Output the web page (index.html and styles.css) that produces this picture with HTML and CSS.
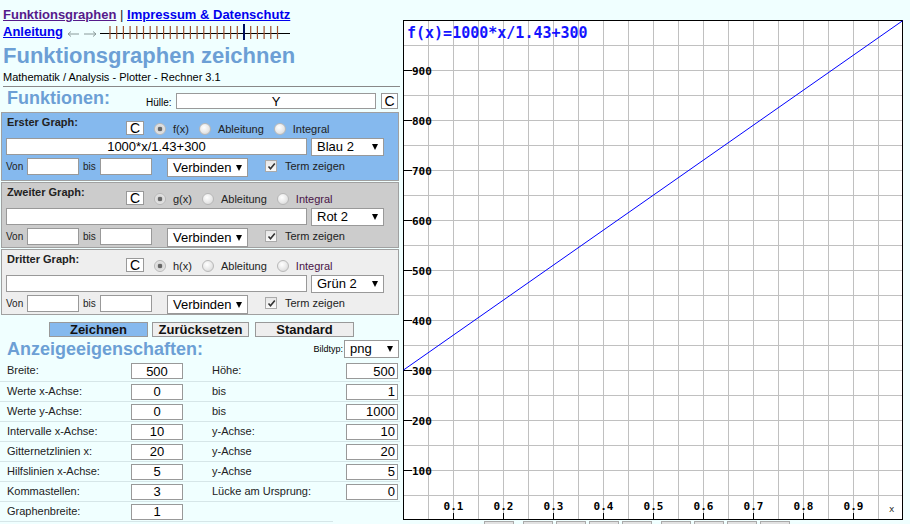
FILE: index.html
```html
<!DOCTYPE html>
<html lang="de">
<head>
    <meta charset="UTF-8">
    <title>Funktionsgraphen zeichnen</title>
    <link rel="stylesheet" href="styles.css">
</head>
<body>
<div class="page">
    <div class="left">
        <div class="nav">
            <a href="#" class="visited">Funktionsgraphen</a> <span class="sep">|</span> <a href="#">Impressum &amp; Datenschutz</a>
        </div>
        <div class="nav">
            <a href="#">Anleitung</a><svg class="ruler" width="226" height="17" viewBox="0 0 226 17">
                <path d="M1 11H12M1 11L4 8.5M1 11L4 13.5" stroke="#8a9a9a" fill="none"/>
                <path d="M17 11H29M29 11L26 8.5M29 11L26 13.5" stroke="#8a9a9a" fill="none"/>
                <path d="M33 10.5H223" stroke="#000"/>
                <path d="M43 3V16M49.7 3V16M56.4 3V16M63.1 3V16M69.8 3V16M76.5 3V16M83.2 3V16M89.9 3V16M96.6 3V16M103.3 3V16M110 3V16M116.7 3V16M123.4 3V16M130.1 3V16M136.8 3V16M143.5 3V16M150.2 3V16M156.9 3V16M163.6 3V16M170.3 3V16M183.7 3V16M190.4 3V16M197.1 3V16M203.8 3V16M210.5 3V16" stroke="#a0522d" stroke-width="1.2"/>
                <path d="M177 1V17" stroke="#001060" stroke-width="2"/>
            </svg>
        </div>
        <h1>Funktionsgraphen zeichnen</h1>
        <div class="sub">Mathematik / Analysis - Plotter - Rechner 3.1</div>

        <div class="funcs-head">
            <h2>Funktionen:</h2>
            <span class="hl">Hülle:</span>
            <input class="huelle" type="text" value="Y">
            <span class="cbtn tall">C</span>
        </div>

        <!-- Erster Graph -->
        <div class="gbox blue">
            <div class="row1">
                <div class="gtitle">Erster Graph:</div>
                <span class="cbtn">C</span>
                <span class="opt"><span class="radio on"></span><span class="olbl">f(x)</span></span>
                <span class="opt"><span class="radio"></span><span class="olbl">Ableitung</span></span>
                <span class="opt"><span class="radio"></span><span class="olbl">Integral</span></span>
            </div>
            <div class="row2">
                <input class="term" type="text" value="1000*x/1.43+300">
                <div class="sel color"><span>Blau 2</span><i class="arrow"></i></div>
            </div>
            <div class="row3">
                <span class="small von">Von</span>
                <input class="range" type="text">
                <span class="small bis">bis</span>
                <input class="range" type="text">
                <div class="sel mode"><span>Verbinden</span><i class="arrow"></i></div>
                <span class="chk"><svg width="9" height="9" viewBox="0 0 9 9"><path d="M1.5 4.5L3.5 6.8L7.8 1.5" stroke="#333" stroke-width="1.6" fill="none"/></svg></span>
                <span class="chk-lbl">Term zeigen</span>
            </div>
        </div>

        <!-- Zweiter Graph -->
        <div class="gbox grey">
            <div class="row1">
                <div class="gtitle">Zweiter Graph:</div>
                <span class="cbtn">C</span>
                <span class="opt"><span class="radio on"></span><span class="olbl">g(x)</span></span>
                <span class="opt"><span class="radio"></span><span class="olbl">Ableitung</span></span>
                <span class="opt"><span class="radio"></span><span class="olbl purple">Integral</span></span>
            </div>
            <div class="row2">
                <input class="term" type="text" value="">
                <div class="sel color"><span>Rot 2</span><i class="arrow"></i></div>
            </div>
            <div class="row3">
                <span class="small von">Von</span>
                <input class="range" type="text">
                <span class="small bis">bis</span>
                <input class="range" type="text">
                <div class="sel mode"><span>Verbinden</span><i class="arrow"></i></div>
                <span class="chk"><svg width="9" height="9" viewBox="0 0 9 9"><path d="M1.5 4.5L3.5 6.8L7.8 1.5" stroke="#333" stroke-width="1.6" fill="none"/></svg></span>
                <span class="chk-lbl">Term zeigen</span>
            </div>
        </div>

        <!-- Dritter Graph -->
        <div class="gbox light">
            <div class="row1">
                <div class="gtitle">Dritter Graph:</div>
                <span class="cbtn">C</span>
                <span class="opt"><span class="radio on"></span><span class="olbl">h(x)</span></span>
                <span class="opt"><span class="radio"></span><span class="olbl">Ableitung</span></span>
                <span class="opt"><span class="radio"></span><span class="olbl purple">Integral</span></span>
            </div>
            <div class="row2">
                <input class="term" type="text" value="">
                <div class="sel color"><span>Grün 2</span><i class="arrow"></i></div>
            </div>
            <div class="row3">
                <span class="small von">Von</span>
                <input class="range" type="text">
                <span class="small bis">bis</span>
                <input class="range" type="text">
                <div class="sel mode"><span>Verbinden</span><i class="arrow"></i></div>
                <span class="chk"><svg width="9" height="9" viewBox="0 0 9 9"><path d="M1.5 4.5L3.5 6.8L7.8 1.5" stroke="#333" stroke-width="1.6" fill="none"/></svg></span>
                <span class="chk-lbl">Term zeigen</span>
            </div>
        </div>

        <div class="actions">
            <span class="btn primary">Zeichnen</span>
            <span class="btn reset">Zurücksetzen</span>
            <span class="btn std">Standard</span>
        </div>

        <div class="props-head">
            <h2>Anzeigeeigenschaften:</h2>
            <span class="bt">Bildtyp:</span>
            <div class="sel png"><span>png</span><i class="arrow"></i></div>
        </div>

        <table class="props">
            <tr><td class="l1">Breite:</td><td class="v1"><input type="text" value="500"></td><td class="l2">Höhe:</td><td class="v2"><input type="text" value="500"></td></tr>
            <tr><td class="l1">Werte x-Achse:</td><td class="v1"><input type="text" value="0"></td><td class="l2">bis</td><td class="v2"><input type="text" value="1"></td></tr>
            <tr><td class="l1">Werte y-Achse:</td><td class="v1"><input type="text" value="0"></td><td class="l2">bis</td><td class="v2"><input type="text" value="1000"></td></tr>
            <tr><td class="l1">Intervalle x-Achse:</td><td class="v1"><input type="text" value="10"></td><td class="l2">y-Achse:</td><td class="v2"><input type="text" value="10"></td></tr>
            <tr><td class="l1">Gitternetzlinien x:</td><td class="v1"><input type="text" value="20"></td><td class="l2">y-Achse</td><td class="v2"><input type="text" value="20"></td></tr>
            <tr><td class="l1">Hilfslinien x-Achse:</td><td class="v1"><input type="text" value="5"></td><td class="l2">y-Achse</td><td class="v2"><input type="text" value="5"></td></tr>
            <tr><td class="l1">Kommastellen:</td><td class="v1"><input type="text" value="3"></td><td class="l2">Lücke am Ursprung:</td><td class="v2"><input type="text" value="0"></td></tr>
            <tr><td class="l1">Graphenbreite:</td><td class="v1"><input type="text" value="1"></td><td class="l2"></td></tr>
        </table>
    </div>

    <div class="right">
        <svg class="plot" width="500" height="500" viewBox="0 0 500 500">
            <defs>
                <pattern id="grid" width="25" height="25" patternUnits="userSpaceOnUse">
                    <path d="M0.5 0V25M0 0.5H25" stroke="#c0c0c0" fill="none"/>
                </pattern>
            </defs>
            <rect width="500" height="500" fill="#fff"/>
            <rect width="500" height="500" fill="url(#grid)"/>
            <rect x="0.5" y="0.5" width="499" height="499" fill="none" stroke="#000"/>

            <!-- y axis -->
            <path d="M0 50.5H9M0 100.5H9M0 150.5H9M0 200.5H9M0 250.5H9M0 300.5H9M0 350.5H9M0 400.5H9M0 450.5H9" stroke="#000"/>
            <g class="ylab">
                <text x="9" y="55">900</text>
                <text x="9" y="105">800</text>
                <text x="9" y="155">700</text>
                <text x="9" y="205">600</text>
                <text x="9" y="255">500</text>
                <text x="9" y="305">400</text>
                <text x="9" y="355">300</text>
                <text x="9" y="405">200</text>
                <text x="9" y="455">100</text>
            </g>

            <!-- x axis -->
            <path d="M50.5 493V499M100.5 493V499M150.5 493V499M200.5 493V499M250.5 493V499M300.5 493V499M350.5 493V499M400.5 493V499M450.5 493V499" stroke="#000"/>
            <g class="xlab">
                <text x="50.5" y="490">0.1</text>
                <text x="100.5" y="490">0.2</text>
                <text x="150.5" y="490">0.3</text>
                <text x="200.5" y="490">0.4</text>
                <text x="250.5" y="490">0.5</text>
                <text x="300.5" y="490">0.6</text>
                <text x="350.5" y="490">0.7</text>
                <text x="400.5" y="490">0.8</text>
                <text x="450.5" y="490">0.9</text>
            </g>
            <text class="xname" x="486" y="492">x</text>

            <line x1="0.5" y1="350" x2="499.5" y2="0.8" stroke="#0000ff" stroke-width="1"/>
            <text class="fterm" x="4" y="18">f(x)=1000*x/1.43+300</text>
        </svg>
        <div class="tools">
            <span></span><span class="gap"></span><span></span><span></span><span></span>
            <span class="gap"></span><span></span><span></span><span></span>
        </div>
    </div>
</div>
</body>
</html>
```

FILE: styles.css
```css
html, body {
    margin: 0;
    padding: 0;
    overflow: hidden;
}

body {
    background: #f0ffff;
    font-family: 'Liberation Sans', Arial, sans-serif;
    color: #000;
}

.page {
    display: flex;
    align-items: flex-start;
}

.left {
    width: 400px;
    flex: none;
}

/* Header */
.nav {
    padding: 0 0 0 3px;
    font: bold 13px/17px 'Liberation Sans', Arial, sans-serif;
    white-space: nowrap;
}

.nav:first-child {
    padding-top: 6px;
}

.nav a {
    color: #0000ee;
}

.nav a.visited {
    color: #551a8b;
}

.nav .sep {
    font-weight: normal;
    color: #222;
}

.ruler {
    vertical-align: top;
    margin-left: 4px;
}

h1 {
    margin: 3px 0 0 3px;
    font: bold 22px/26px 'Liberation Sans', Arial, sans-serif;
    color: #6c9fd5;
}

.sub {
    margin: 2px 0 0 3px;
    padding-bottom: 2px;
    font: 11px/13px 'Liberation Sans', Arial, sans-serif;
    border-bottom: 1px solid #888;
}

h2 {
    margin: 1px 0 0 7px;
    font: bold 18px/20px 'Liberation Sans', Arial, sans-serif;
    color: #6c9fd5;
}

/* Funktionen */
.funcs-head {
    display: flex;
    align-items: flex-start;
    height: 25px;
}

.funcs-head h2 {
    width: 139px;
}

.hl {
    width: 30px;
    margin-top: 10px;
    font: 10px/12px 'Liberation Sans', Arial, sans-serif;
}

input {
    box-sizing: border-box;
    height: 17px;
    margin: 0;
    padding: 0 2px;
    border: 1px solid #999;
    background: #fff;
    font: 13px 'Liberation Sans', Arial, sans-serif;
    color: #000;
    outline: none;
}

.huelle {
    width: 200px;
    height: 16px;
    margin-top: 6px;
    text-align: center;
}

.cbtn {
    box-sizing: border-box;
    display: flex;
    align-items: center;
    justify-content: center;
    width: 18px;
    height: 14px;
    margin-top: 8px;
    border: 1px solid #999;
    background: #fff;
    font: 14px/12px 'Liberation Sans', Arial, sans-serif;
}

.cbtn.tall {
    width: 17px;
    height: 16px;
    margin: 6px 0 0 5px;
}

/* Graph boxes */
.gbox {
    margin: 0 1px 1px;
    padding: 0 4px;
    border: 1px solid #a0a0a0;
}

.gbox.blue {
    background: #85b9ee;
    padding-bottom: 3px;
}

.gbox.grey {
    background: #cccccc;
}

.gbox.light {
    background: #eeeeee;
}

.row1 {
    display: flex;
    align-items: flex-start;
    height: 25px;
}

.gtitle {
    width: 119px;
    padding: 3px 0 0 1px;
    font: bold 11px/13px 'Liberation Sans', Arial, sans-serif;
    color: #222;
}

.opt {
    display: flex;
    align-items: flex-start;
    margin: 10px 0 0 10px;
}

.radio {
    box-sizing: border-box;
    width: 12px;
    height: 12px;
    border: 1px solid #b8b8b8;
    border-radius: 50%;
    background: radial-gradient(circle at 40% 35%, #ffffff 0%, #e8e8e8 55%, #cfcfcf 100%);
}

.radio.on {
    background: radial-gradient(circle, #666 0, #666 2px, #d6d6d6 2.6px, #f4f4f4 100%);
}

.olbl {
    margin-left: 7px;
    font: 11px/13px 'Liberation Sans', Arial, sans-serif;
    color: #222;
}

.olbl.purple {
    color: #4a1448;
}

.row2 {
    display: flex;
    align-items: flex-start;
    height: 20px;
}

.term {
    width: 301px;
    text-align: center;
}

.sel {
    box-sizing: border-box;
    display: flex;
    align-items: center;
    justify-content: space-between;
    height: 18px;
    padding: 0 5px 0 5px;
    border: 1px solid #999;
    background: #fff;
    font: 13px/16px 'Liberation Sans', Arial, sans-serif;
}

.arrow {
    width: 0;
    height: 0;
    border-left: 3px solid transparent;
    border-right: 3px solid transparent;
    border-top: 6px solid #000;
}

.sel.color {
    width: 73px;
    margin-left: 4px;
}

.row3 {
    display: flex;
    align-items: flex-start;
    height: 19px;
}

.small {
    font: 10px/18px 'Liberation Sans', Arial, sans-serif;
    color: #222;
}

.von {
    width: 21px;
}

.bis {
    width: 17px;
    margin-left: 4px;
}

.range {
    width: 52px;
}

.sel.mode {
    width: 81px;
    height: 19px;
    margin-left: 15px;
}

.chk {
    box-sizing: border-box;
    display: flex;
    align-items: center;
    justify-content: center;
    width: 12px;
    height: 12px;
    margin: 2px 0 0 17px;
    border: 1px solid #aaa;
    background: linear-gradient(#e6e6e6, #fafafa);
}

.chk-lbl {
    margin-left: 8px;
    font: 11px/17px 'Liberation Sans', Arial, sans-serif;
    color: #222;
}

/* Buttons */
.actions {
    display: flex;
    margin: 7px 0 0 49px;
}

.btn {
    box-sizing: border-box;
    height: 15px;
    border: 1px solid #999;
    background: #eeeeee;
    font: bold 13px/13px 'Liberation Sans', Arial, sans-serif;
    text-align: center;
    color: #111;
}

.btn.primary {
    width: 99px;
    background: #85b9ee;
}

.btn.reset {
    width: 97px;
    margin-left: 4px;
}

.btn.std {
    width: 99px;
    margin-left: 6px;
}

/* Anzeigeeigenschaften */
.props-head {
    display: flex;
    align-items: flex-start;
    height: 24px;
}

.props-head h2 {
    margin-top: 2px;
}

.bt {
    margin: 7px 1px 0 auto;
    font: 9px/11px 'Liberation Sans', Arial, sans-serif;
}

.sel.png {
    width: 55px;
    margin: 3px 1px 0 0;
}

.props {
    width: 400px;
    table-layout: fixed;
    border-collapse: collapse;
}

.props td {
    box-sizing: border-box;
    height: 20px;
    padding: 0;
    border-bottom: 1px solid #d6e6e8;
    vertical-align: top;
    font: 11px/13px 'Liberation Sans', Arial, sans-serif;
    color: #222;
}

.props td.l1,
.props td.l2 {
    padding: 3px 0 0 7px;
}

.props td.l1 {
    width: 128px;
}

.props td.v1 {
    width: 77px;
    padding-left: 3px;
}

.props td.l2 {
    width: 128px;
}

.props td.v2 {
    width: 67px;
    padding-right: 2px;
}

.props input {
    display: block;
    width: 52px;
    height: 16px;
    margin-top: 2px;
    text-align: center;
}

.props td.v2 input {
    margin-left: auto;
    text-align: right;
}

/* Plot */
.right {
    margin: 20px 0 0 3px;
}

.plot {
    display: block;
}

.ylab text,
.xlab text {
    font: bold 11px 'DejaVu Sans Mono', monospace;
    fill: #000;
}

.xlab text {
    text-anchor: middle;
}

.xname {
    font: 9px 'DejaVu Sans', sans-serif;
    fill: #333;
}

.fterm {
    font: bold 15px 'DejaVu Sans Mono', monospace;
    fill: #1414ff;
}

.tools {
    display: flex;
    margin: 1px 0 0 81px;
}

.tools span {
    box-sizing: border-box;
    width: 30px;
    height: 18px;
    margin-right: 3px;
    border: 1px solid #aaa;
    background: #e2e2e2;
}

.tools span.gap {
    margin-left: 6px;
}
```
